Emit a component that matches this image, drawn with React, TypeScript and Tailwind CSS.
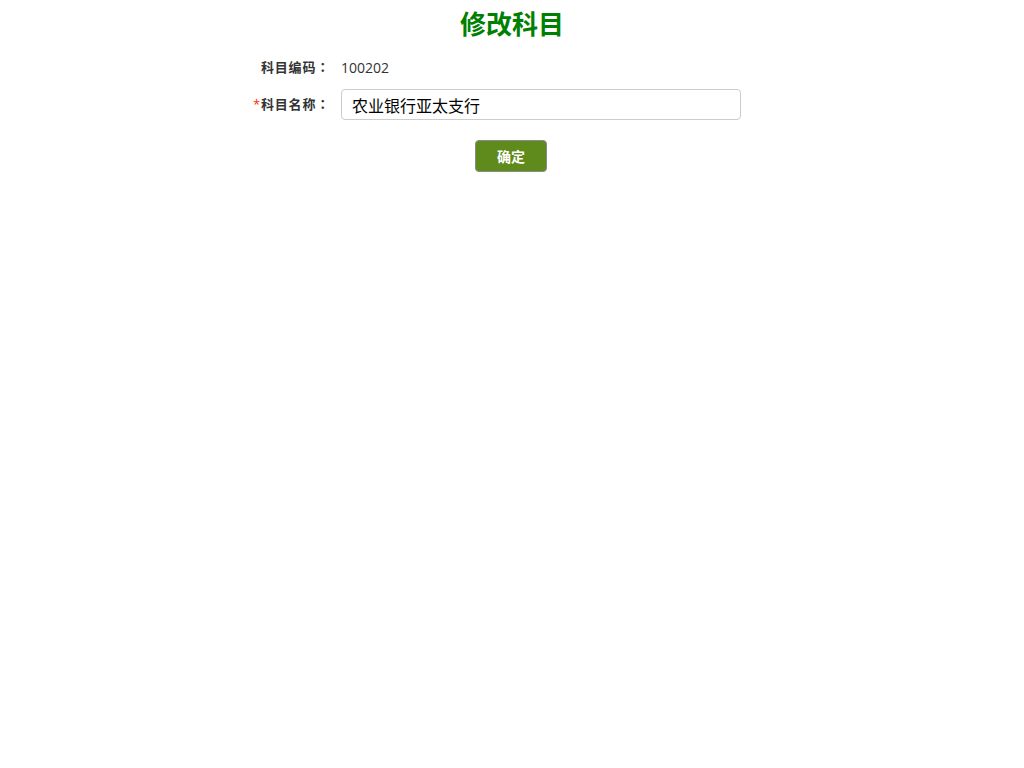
import React, { useState } from 'react';

const font = "font-['Open_Sans','Noto_Sans_CJK_SC',sans-serif]";

// full-width colon centred in its cell, as in the reference
const Colon = () => <span className="font-['Noto_Sans_CJK_JP',sans-serif]">：</span>;

const App = () => {
  const [name, setName] = useState<string>("农业银行亚太支行");

  return (
    <div className={`min-h-screen bg-white ${font}`}>
      <h1 className="pt-[7px] text-center text-[26px] leading-[34px] font-bold text-[#008000]">修改科目</h1>

      <div className="mx-auto mt-[14px] w-[600px]">
        <div className="flex items-center h-[24px]">
          <div className="w-[118px] text-right text-[13px] font-bold tracking-[0.8px] text-[#333]">
            科目编码<Colon />
          </div>
          <div className="ml-[11px] text-[14px] text-[#333]">100202</div>
        </div>

        <div className="mt-[10px] flex items-center">
          <div className="w-[118px] text-right text-[13px] font-bold tracking-[0.8px] text-[#333]">
            <span className="font-normal text-[#ff2a00]">*</span>科目名称<Colon />
          </div>
          <input
            className="ml-[11px] h-[31px] w-[400px] rounded-[4px] border border-[#ccc] px-[10px] text-[16px] text-black outline-none"
            value={name}
            onChange={(e) => setName(e.target.value)}
          />
        </div>

        <div className="mt-[20px] flex">
          <button className="ml-[263px] h-[32px] w-[72px] rounded-[4px] border border-[#8a8a8a] bg-[#5f8a1c] text-[14px] font-bold text-white">
            确定
          </button>
        </div>
      </div>
    </div>
  );
};

export default App;
